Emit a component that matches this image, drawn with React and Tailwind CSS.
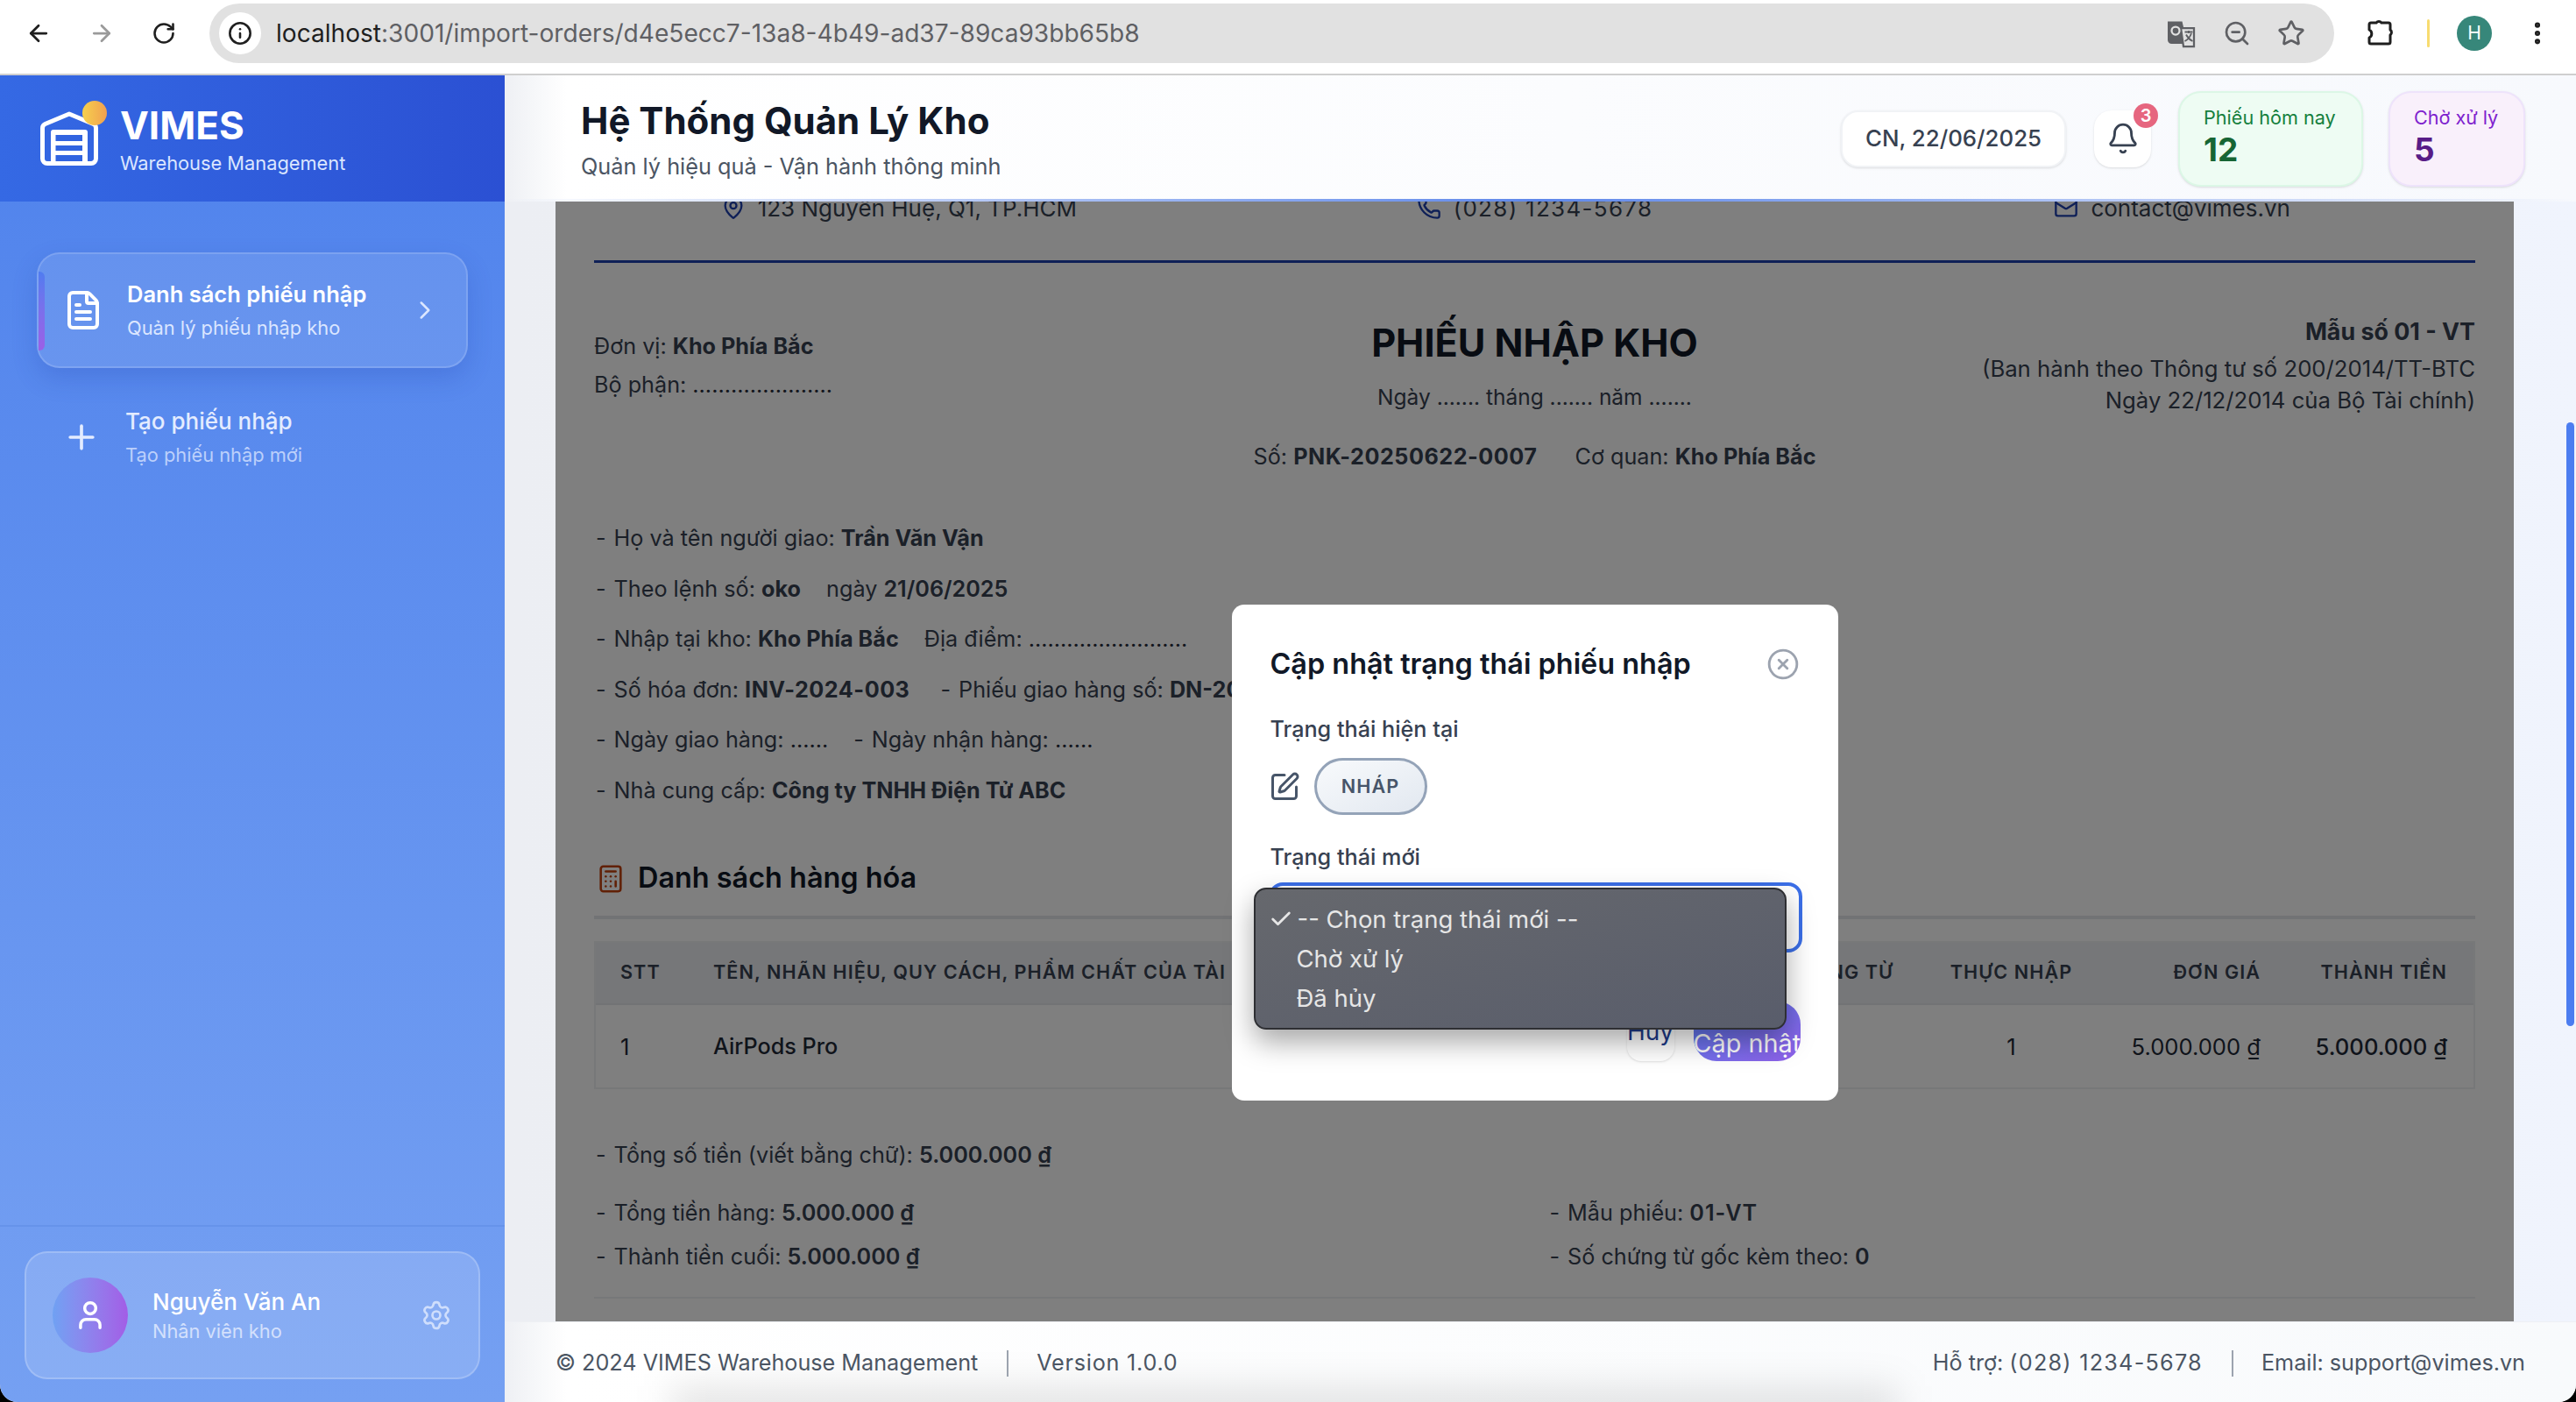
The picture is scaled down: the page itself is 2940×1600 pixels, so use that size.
import {
  ArrowLeft,
  ArrowRight,
  RotateCw,
  Info,
  ZoomOut,
  Star,
  EllipsisVertical,
  FileText,
  Plus,
  ChevronRight,
  User,
  Settings,
  Bell,
  MapPin,
  Phone,
  Mail,
  Calculator,
  SquarePen,
  CircleX,
  Check,
} from "lucide-react";

const Dash = () => <span className="mr-[9px]">-</span>;
const Dots = ({ n }) => <span className="text-[#1f2937]">{".".repeat(n)}</span>;
const B = ({ children }) => <b className="font-bold">{children}</b>;
const Num = ({ children }) => <b className="font-semibold">{children}</b>;

const fieldLines = [
  <><Dash />Họ và tên người giao: <B>Trần Văn Vận</B></>,
  <><Dash />Theo lệnh số: <B>oko</B> <span className="ml-[22px]">ngày</span> <Num>21/06/2025</Num></>,
  <><Dash />Nhập tại kho: <B>Kho Phía Bắc</B> <span className="ml-[22px]">Địa điểm:</span> <Dots n={25} /></>,
  <><Dash />Số hóa đơn: <b className="font-bold tracking-[0.02em]">INV-2024-003</b> <span className="ml-[28px]"><Dash />Phiếu giao hàng số:</span> <B>DN-2024-003</B></>,
  <><Dash />Ngày giao hàng: <Dots n={6} /> <span className="ml-[22px]"><Dash />Ngày nhận hàng:</span> <Dots n={6} /></>,
  <><Dash />Nhà cung cấp: <B>Công ty TNHH Điện Tử ABC</B></>,
];

const ChromeBar = () => (
  <div className="flex h-[86px] items-center border-b-2 border-[#cfcfcf] bg-white pb-[8px] text-[#1f1f1f]">
    <ArrowLeft className="ml-[29px] size-[30px]" strokeWidth={2.2} />
    <ArrowRight className="ml-[42px] size-[30px] text-[#9a9a9a]" strokeWidth={2.2} />
    <RotateCw className="ml-[42px] size-[28px]" strokeWidth={2.2} />
    <div className="ml-[38px] flex h-[68px] w-[2425px] items-center rounded-full bg-[#e1e1e1]">
      <div className="ml-[11px] flex size-[48px] items-center justify-center rounded-full bg-white">
        <Info className="size-[28px]" strokeWidth={2.2} />
      </div>
      <div className="ml-[17px] text-[28.1px] text-[#5f6064]">
        <span className="text-[#1f1f1f]">localhost</span>:3001/import-orders/d4e5ecc7-13a8-4b49-ad37-89ca93bb65b8
      </div>
      <div className="ml-auto mr-[33px] flex items-center gap-[30px] text-[#5f6064]">
        <svg viewBox="0 0 24 24" className="size-[36px]" fill="none">
          <path d="M2 3h11l4 17H5a3 3 0 0 1-3-3z" fill="#5f6064" />
          <path d="M12 8h10v14H14z" fill="#e1e1e1" stroke="#5f6064" strokeWidth="1.5" />
          <path d="M15 11h6M18 10v2M20 12c-1 3-3 5-5 6M16 13c1 2 3 4 5 5" stroke="#5f6064" strokeWidth="1.2" />
          <circle cx="8" cy="10" r="3" stroke="#e1e1e1" strokeWidth="1.5" />
        </svg>
        <ZoomOut className="size-[32px]" strokeWidth={2} />
        <Star className="size-[32px]" strokeWidth={2} />
      </div>
    </div>
    <svg viewBox="0 0 36 36" className="ml-[37px] size-[36px]" fill="none" stroke="#1f1f1f" strokeWidth="3" strokeLinejoin="round">
      <path d="M5 6h6a3.8 3.8 0 0 1 6 0h8a2 2 0 0 1 2 2v6a3.8 3.8 0 0 1 0 6v8a2 2 0 0 1-2 2H5a2 2 0 0 1-2-2v-5a5 5 0 0 0 0-9V8a2 2 0 0 1 2-2z" />
    </svg>
    <div className="ml-[33px] h-[32px] w-[3px] rounded-full bg-[#f8dc70]" />
    <div className="ml-[31px] flex size-[40px] items-center justify-center rounded-full bg-[#37877a] text-[21px] text-white">H</div>
    <EllipsisVertical className="ml-[36px] size-[32px]" strokeWidth={2.6} />
  </div>
);

const Sidebar = () => (
  <aside className="flex w-[576px] shrink-0 flex-col bg-gradient-to-b from-[#4f82ec] to-[#75a0f2]">
    <div className="flex h-[144px] items-center bg-gradient-to-r from-[#3569e4] to-[#2b50d3] pl-[46px]">
      <div className="relative h-[62px] w-[66px]">
        <svg viewBox="0 0 66 62" className="size-full" fill="none">
          <path d="M2.5 19a5 5 0 0 1 3-4.5L33 3l27.5 11.5a5 5 0 0 1 3 4.5v35a5.5 5.5 0 0 1-5.5 5.5H8A5.5 5.5 0 0 1 2.5 54z" stroke="white" strokeWidth="5" strokeLinejoin="round" />
          <path d="M12 24a3 3 0 0 1 3-3h36a3 3 0 0 1 3 3v38H12z" fill="white" />
          <path d="M17.5 27H48v7H17.5zM17.5 39H48v6H17.5zM17.5 50H48v7H17.5z" fill="#3164e0" />
        </svg>
        <div className="absolute right-[-10px] top-[-12px] size-[28px] rounded-full bg-gradient-to-r from-[#f5d04c] to-[#f0a050]" />
      </div>
      <div className="ml-[25px]">
        <div className="mt-[2px] text-[44px] font-bold leading-[50px] text-white">VIMES</div>
        <div className="mt-[4px] text-[21.8px] leading-[28px] text-[#dbe6ff]">Warehouse Management</div>
      </div>
    </div>

    <nav className="px-[42px] pt-[58px]">
      <div className="relative flex h-[132px] items-center rounded-[26px] border-2 border-white/15 bg-white/10 pl-[27px] shadow-[0_12px_28px_rgba(30,64,175,0.22)]">
        <div className="absolute left-0 top-[20px] h-[90px] w-[7px] rounded-r-md bg-gradient-to-b from-[#4f7cf0] to-[#9b5fe6]" />
        <FileText className="size-[48px] text-white" strokeWidth={2} />
        <div className="ml-[26px]">
          <div className="text-[25.5px] font-semibold leading-[34px] text-white">Danh sách phiếu nhập</div>
          <div className="mt-[6px] text-[21.8px] leading-[30px] text-[#dbe6ff]">Quản lý phiếu nhập kho</div>
        </div>
        <ChevronRight className="ml-auto mr-[30px] size-[34px] text-[#dbe6ff]" strokeWidth={1.8} />
      </div>
      <div className="mt-[13px] flex h-[132px] items-center pl-[29px] text-[#e4ecff]">
        <Plus className="size-[44px]" strokeWidth={2} />
        <div className="ml-[28px]">
          <div className="text-[26px] font-medium leading-[34px]">Tạo phiếu nhập</div>
          <div className="mt-[6px] text-[21.8px] leading-[30px] text-[#bcd0fb]">Tạo phiếu nhập mới</div>
        </div>
      </div>
    </nav>

    <div className="mt-auto border-t-2 border-[#6693ea] px-[28px] pb-[26px] pt-[28px]">
      <div className="flex h-[146px] items-center rounded-[26px] border-2 border-white/20 bg-white/15 pl-[30px]">
        <div className="flex size-[86px] items-center justify-center rounded-full bg-gradient-to-r from-[#6fa1f3] to-[#a25de6]">
          <User className="size-[38px] text-white" strokeWidth={2.2} />
        </div>
        <div className="ml-[28px]">
          <div className="mt-[2px] text-[26px] font-medium leading-[34px] text-white">Nguyễn Văn An</div>
          <div className="text-[21.8px] leading-[32px] text-[#d3e0fc]">Nhân viên kho</div>
        </div>
        <Settings className="ml-auto mr-[30px] size-[36px] text-[#cfdefc]" strokeWidth={1.8} />
      </div>
    </div>
  </aside>
);

const Header = () => (
  <header className="relative flex h-[144px] shrink-0 items-center bg-gradient-to-r from-[#eef0f4] via-white via-[3%] to-[#f7f9fd] pl-[87px] pr-[58px]">
    <div className="pt-[2px]">
      <h1 className="text-[42px] font-bold leading-[56px] text-[#111827]">Hệ Thống Quản Lý Kho</h1>
      <p className="mt-[6px] text-[25.3px] leading-[36px] text-[#4b5563]">Quản lý hiệu quả - Vận hành thông minh</p>
    </div>
    <div className="ml-auto flex items-center">
      <div className="flex h-[65px] w-[257px] items-center justify-center rounded-[20px] border-2 border-[#f1f3f6] bg-white text-[25.8px] font-medium text-[#374151] shadow-sm">
        CN, 22/06/2025
      </div>
      <div className="relative ml-[32px] flex h-[65px] w-[65px] items-center justify-center rounded-[20px] bg-white shadow-sm">
        <Bell className="size-[38px] text-[#374151]" strokeWidth={1.8} />
        <div className="absolute right-[-8px] top-[-8px] flex size-[28px] items-center justify-center rounded-full bg-[#e6667f] text-[20px] font-semibold text-white">3</div>
      </div>
      <div className="ml-[31px] h-[109px] w-[211px] rounded-[26px] border-2 border-[#dcf7e6] bg-[#eefcf3] pl-[27px] pt-[13px] shadow-sm">
        <div className="text-[21.6px] leading-[30px] text-[#15803d]">Phiếu hôm nay</div>
        <div className="text-[37px] font-bold leading-[44px] text-[#166534]">12</div>
      </div>
      <div className="ml-[29px] h-[109px] w-[156px] rounded-[26px] border-2 border-[#eee3fb] bg-[#f9f0fb] pl-[27px] pt-[13px] shadow-sm">
        <div className="text-[21.6px] leading-[30px] text-[#7e22ce]">Chờ xử lý</div>
        <div className="text-[37px] font-bold leading-[44px] text-[#581c87]">5</div>
      </div>
    </div>
    <div className="absolute bottom-0 left-0 right-0 h-[3px] bg-gradient-to-r from-transparent via-[#5f88ea] to-transparent" />
  </header>
);

const GoodsTable = () => {
  const cols = "grid grid-cols-[134px_1086px_291px_209px_210px_1fr] items-center";
  return (
    <div className="mt-[25px] border-2 border-[#eef0f3] text-[#1f2937]">
      <div className={`${cols} h-[71px] border-b-2 border-[#e5e7eb] bg-[#eceef2] pb-[1px] text-[21.6px] font-semibold tracking-[0.05em] text-[#374151]`}>
        <div className="pl-[28px]">STT</div>
        <div className="whitespace-nowrap">TÊN, NHÃN HIỆU, QUY CÁCH, PHẨM CHẤT CỦA TÀI SẢN</div>
        <div className="whitespace-nowrap pr-[30px] text-right">THEO CHỨNG TỪ</div>
        <div className="text-center">THỰC NHẬP</div>
        <div className="pr-[30px] text-right">ĐƠN GIÁ</div>
        <div className="pr-[30px] text-right">THÀNH TIỀN</div>
      </div>
      <div className={`${cols} h-[94px] pt-[3px] text-[25.6px]`}>
        <div className="pl-[28px]">1</div>
        <div className="text-[25.2px] font-medium">AirPods Pro</div>
        <div />
        <div className="text-center">1</div>
        <div className="pr-[30px] text-right">5.000.000 ₫</div>
        <div className="pr-[30px] text-right font-medium">5.000.000 ₫</div>
      </div>
    </div>
  );
};

const ImportDocument = () => (
  <div className="-mt-[13px] bg-white px-[44px] pb-[60px] text-[25.2px] text-[#374151]">
    <div className="grid h-[40px] grid-cols-3 items-center text-[26px]">
      <div className="flex items-center justify-center gap-[14px] pr-[20px]"><MapPin className="size-[28px] text-[#1e40af]" />123 Nguyễn Huệ, Q1, TP.HCM</div>
      <div className="flex items-center justify-center gap-[14px]"><Phone className="size-[28px] text-[#1e40af]" /><span className="tracking-[0.05em]">(028) 1234-5678</span></div>
      <div className="flex items-center justify-center gap-[14px] pl-[24px]"><Mail className="size-[28px] text-[#1e40af]" />contact@vimes.vn</div>
    </div>
    <div className="mt-[40px] h-[3px] bg-[#1e40af]" />

    <div className="mt-[60px] grid grid-cols-[1fr_auto_1fr] items-start">
      <div className="pt-[13px] leading-[44px]">
        <div>Đơn vị: <B>Kho Phía Bắc</B></div>
        <div>Bộ phận: <Dots n={22} /></div>
      </div>
      <div className="pt-[1px] text-center">
        <div className="text-[43.2px] font-bold leading-[60px] text-[#111827]">PHIẾU NHẬP KHO</div>
        <div className="mt-[14px] text-[24.5px] leading-[36px]">Ngày ....... tháng ....... năm .......</div>
        <div className="mt-[32px] leading-[36px]">
          Số: <b className="font-bold tracking-[0.02em]">PNK-20250622-0007</b> <span className="ml-[36px]">Cơ quan:</span> <B>Kho Phía Bắc</B>
        </div>
      </div>
      <div className="text-right leading-[36px]">
        <div className="text-[26.8px] font-bold">Mẫu số 01 - VT</div>
        <div className="mt-[7px] text-[25.7px]">(Ban hành theo Thông tư số 200/2014/TT-BTC</div>
        <div className="text-[25.7px]">Ngày 22/12/2014 của Bộ Tài chính)</div>
      </div>
    </div>

    <div className="mt-[47px] pl-[2px]">
      {fieldLines.map((line, i) => (
        <div key={i} className="whitespace-nowrap leading-[57.6px]">{line}</div>
      ))}
    </div>

    <div className="mt-[47px] flex h-[48px] items-center pl-[2px]">
      <Calculator className="size-[34px] text-[#c2410c]" strokeWidth={1.8} />
      <h2 className="ml-[14px] text-[32.4px] font-semibold text-[#111827]">Danh sách hàng hóa</h2>
    </div>
    <div className="mt-[18px] h-[4px] bg-[#e5e7eb]" />
    <GoodsTable />

    <div className="mt-[55px] pl-[2px] leading-[40px]"><Dash />Tổng số tiền (viết bằng chữ): <Num>5.000.000 ₫</Num></div>
    <div className="mt-[26px] grid grid-cols-2 gap-y-[10px] pl-[2px] leading-[40px]">
      <div><Dash />Tổng tiền hàng: <Num>5.000.000 ₫</Num></div>
      <div className="pl-[16px]"><Dash />Mẫu phiếu: <b className="font-semibold tracking-[0.04em]">01-VT</b></div>
      <div><Dash />Thành tiền cuối: <Num>5.000.000 ₫</Num></div>
      <div className="pl-[16px]"><Dash />Số chứng từ gốc kèm theo: <Num>0</Num></div>
    </div>
    <div className="mt-[26px] h-[2px] bg-[#eef0f3]" />
  </div>
);

const StatusModal = () => (
  <div className="relative h-[566px] w-[692px] rounded-[14px] bg-white px-[44px] pt-[40px]">
    <div className="flex items-center justify-between">
      <h3 className="text-[32.4px] font-semibold leading-[56px] text-[#111827]">Cập nhật trạng thái phiếu nhập</h3>
      <CircleX className="size-[38px] text-[#9ca3af]" strokeWidth={1.8} />
    </div>
    <div className="mt-[28px] text-[25.2px] font-medium leading-[36px] text-[#374151]">Trạng thái hiện tại</div>
    <div className="mt-[15px] flex items-center">
      <SquarePen className="ml-[-2px] size-[36px] text-[#475569]" strokeWidth={2} />
      <div className="ml-[16px] flex h-[65px] w-[129px] items-center justify-center rounded-full border-[3px] border-[#94a3b8] bg-gradient-to-br from-[#f8fafc] to-[#e2e8f0] text-[21.6px] font-semibold tracking-[0.05em] text-[#475569]">
        NHÁP
      </div>
    </div>
    <div className="mt-[30px] text-[25.2px] font-medium leading-[36px] text-[#374151]">Trạng thái mới</div>
    <div className="ml-[-2px] mt-[11px] h-[80px] w-[609px] rounded-[16px] border-4 border-[#3b6fe8] bg-white" />

    <div className="mt-[58px] flex justify-end">
      <button className="mt-[-2px] h-[68px] w-[54px] whitespace-nowrap rounded-[16px] bg-white text-center text-[28px] leading-[22px] text-[#1e3a8a] shadow-sm">Hủy</button>
      <button className="ml-[22px] mr-[-1px] mt-[-2px] h-[68px] w-[122px] overflow-hidden whitespace-nowrap rounded-[26px] bg-gradient-to-br from-[#4f7cf0] to-[#8f5fe8] pt-[26px] text-left text-[28.8px] text-white">Cập nhật</button>
    </div>

    {/* native select list */}
    <div className="absolute left-[25px] top-[323px] h-[162px] w-[608px] rounded-[14px] border-2 border-[#2e2f33] bg-gradient-to-br from-[#66686d] to-[#595d6b] text-[27.5px] leading-[45px] text-[#e6e6e6] shadow-[0_14px_32px_rgba(0,0,0,0.35)]">
      <div className="flex h-[57px] items-end pl-[15px]">
        <Check className="mb-[9px] size-[28px]" strokeWidth={2.4} />
        <span className="ml-[5px]">-- Chọn trạng thái mới --</span>
      </div>
      <div className="pl-[47px]">Chờ xử lý</div>
      <div className="pl-[47px]">Đã hủy</div>
    </div>
  </div>
);

const Footer = () => (
  <footer className="relative flex h-[92px] shrink-0 items-center overflow-hidden border-t border-[#eef0f4] bg-gradient-to-r from-[#eef0f4] via-white via-[3%] to-[#f8fafc] pl-[58px] pr-[58px] pt-[2px] text-[25.2px] text-[#4b5563]">
    <div className="absolute bottom-[-32px] left-[190px] h-[50px] w-[1400px] bg-black/10 blur-[20px]" />
    <span className="relative">© 2024 VIMES Warehouse Management</span>
    <div className="relative ml-[33px] h-[30px] w-[2px] bg-[#9ca3af]" />
    <span className="relative ml-[32px] tracking-[0.03em]">Version 1.0.0</span>
    <span className="relative ml-auto">Hỗ trợ: <span className="tracking-[0.05em]">(028) 1234-5678</span></span>
    <div className="relative ml-[33px] h-[30px] w-[2px] bg-[#9ca3af]" />
    <span className="relative ml-[32px]">Email: support@vimes.vn</span>
  </footer>
);

export default function App() {
  return (
    <div className="h-[1600px] w-[2940px] bg-black font-[Inter,sans-serif]">
      <div className="flex h-full flex-col overflow-hidden rounded-b-[20px] bg-white">
        <ChromeBar />
        <div className="flex min-h-0 flex-1">
          <Sidebar />
          <div className="flex min-w-0 flex-1 flex-col">
            <Header />
            <main className="relative min-h-0 flex-1 overflow-hidden bg-gradient-to-r from-[#eceef3] to-[#f0f4fd] pl-[58px] pr-[71px]">
              <ImportDocument />
              <div className="absolute bottom-0 left-[58px] right-[71px] top-0 flex justify-center bg-black/50 pt-[460px]">
                <StatusModal />
              </div>
              <div className="absolute right-[2px] top-[252px] h-[689px] w-[9px] rounded-full bg-[#4c7df0]" />
            </main>
            <Footer />
          </div>
        </div>
      </div>
    </div>
  );
}
